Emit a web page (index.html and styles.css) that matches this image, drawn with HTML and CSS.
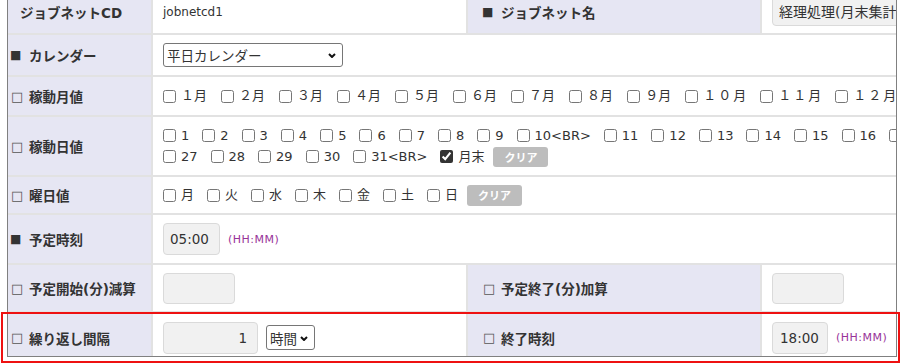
FILE: index.html
```html
<!DOCTYPE html>
<html lang="ja">
<head>
<meta charset="utf-8">
<title>ジョブネット</title>
<link rel="stylesheet" href="styles.css">
</head>
<body>
<div class="page">
  <div class="grid">
    <!-- row 1 -->
    <div class="lbl lbl-cd">ジョブネットCD</div>
    <div class="val"><span class="plain">jobnetcd1</span></div>
    <div class="lbl lbl-r"><span class="mk">■</span>ジョブネット名</div>
    <div class="val last"><input class="txt txt-name" type="text" value="経理処理(月末集計)"></div>

    <!-- row 2 -->
    <div class="lbl"><span class="mk">■</span>カレンダー</div>
    <div class="val span3">
      <div class="sel sel-cal">
        <select><option>平日カレンダー</option></select>
        <svg class="chev" width="8" height="5" viewBox="0 0 8 5"><polyline points="1,1 4,4 7,1" fill="none" stroke="#111" stroke-width="2"/></svg>
      </div>
    </div>

    <!-- row 3 -->
    <div class="lbl"><span class="mk mk-o">□</span>稼動月値</div>
    <div class="val span3">
      <div class="checks months">
        <label class="ck"><input type="checkbox">１月</label>
        <label class="ck"><input type="checkbox">２月</label>
        <label class="ck"><input type="checkbox">３月</label>
        <label class="ck"><input type="checkbox">４月</label>
        <label class="ck"><input type="checkbox">５月</label>
        <label class="ck"><input type="checkbox">６月</label>
        <label class="ck"><input type="checkbox">７月</label>
        <label class="ck"><input type="checkbox">８月</label>
        <label class="ck"><input type="checkbox">９月</label>
        <label class="ck ck-wide"><input type="checkbox">１０月</label>
        <label class="ck ck-wide"><input type="checkbox">１１月</label>
        <label class="ck ck-wide"><input type="checkbox">１２月</label>
      </div>
    </div>

    <!-- row 4 -->
    <div class="lbl"><span class="mk mk-o">□</span>稼動日値</div>
    <div class="val span3">
      <div class="lines">
        <div class="checks line">
          <label class="ck"><input type="checkbox">1</label>
          <label class="ck"><input type="checkbox">2</label>
          <label class="ck"><input type="checkbox">3</label>
          <label class="ck"><input type="checkbox">4</label>
          <label class="ck"><input type="checkbox">5</label>
          <label class="ck"><input type="checkbox">6</label>
          <label class="ck"><input type="checkbox">7</label>
          <label class="ck"><input type="checkbox">8</label>
          <label class="ck"><input type="checkbox">9</label>
          <label class="ck"><input type="checkbox">10&lt;BR&gt;</label>
          <label class="ck"><input type="checkbox">11</label>
          <label class="ck"><input type="checkbox">12</label>
          <label class="ck"><input type="checkbox">13</label>
          <label class="ck"><input type="checkbox">14</label>
          <label class="ck"><input type="checkbox">15</label>
          <label class="ck"><input type="checkbox">16</label>
          <label class="ck"><input type="checkbox">17</label>
          <label class="ck"><input type="checkbox">18</label>
          <label class="ck"><input type="checkbox">19</label>
          <label class="ck"><input type="checkbox">20</label>
          <label class="ck"><input type="checkbox">21</label>
          <label class="ck"><input type="checkbox">22</label>
          <label class="ck"><input type="checkbox">23</label>
          <label class="ck"><input type="checkbox">24</label>
          <label class="ck"><input type="checkbox">25</label>
          <label class="ck"><input type="checkbox">26</label>
        </div>
        <div class="checks line">
          <label class="ck"><input type="checkbox">27</label>
          <label class="ck"><input type="checkbox">28</label>
          <label class="ck"><input type="checkbox">29</label>
          <label class="ck"><input type="checkbox">30</label>
          <label class="ck"><input type="checkbox">31&lt;BR&gt;</label>
          <label class="ck"><input type="checkbox" checked>月末</label>
          <button class="clr" type="button">クリア</button>
        </div>
      </div>
    </div>

    <!-- row 5 -->
    <div class="lbl"><span class="mk mk-o">□</span>曜日値</div>
    <div class="val span3">
      <div class="checks">
        <label class="ck"><input type="checkbox">月</label>
        <label class="ck"><input type="checkbox">火</label>
        <label class="ck"><input type="checkbox">水</label>
        <label class="ck"><input type="checkbox">木</label>
        <label class="ck"><input type="checkbox">金</label>
        <label class="ck"><input type="checkbox">土</label>
        <label class="ck"><input type="checkbox">日</label>
        <button class="clr clr-wd" type="button">クリア</button>
      </div>
    </div>

    <!-- row 6 -->
    <div class="lbl"><span class="mk">■</span>予定時刻</div>
    <div class="val span3">
      <input class="txt w-time" type="text" value="05:00">
      <span class="hint">(HH:MM)</span>
    </div>

    <!-- row 7 -->
    <div class="lbl"><span class="mk mk-o">□</span>予定開始(分)減算</div>
    <div class="val"><input class="txt w-num" type="text" value=""></div>
    <div class="lbl lbl-r"><span class="mk mk-o">□</span>予定終了(分)加算</div>
    <div class="val last"><input class="txt w-num" type="text" value=""></div>

    <!-- row 8 -->
    <div class="lbl end low"><span class="mk mk-o">□</span>繰り返し間隔</div>
    <div class="val end low">
      <input class="txt w-rep" type="text" value="1">
      <div class="sel sel-unit">
        <select><option>時間</option></select>
        <svg class="chev" width="8" height="5" viewBox="0 0 8 5"><polyline points="1,1 4,4 7,1" fill="none" stroke="#111" stroke-width="2"/></svg>
      </div>
    </div>
    <div class="lbl lbl-r end low"><span class="mk mk-o">□</span>終了時刻</div>
    <div class="val last end low">
      <input class="txt w-time2" type="text" value="18:00">
      <span class="hint">(HH:MM)</span>
    </div>
  </div>
  <div class="redbox"></div>
</div>
</body>
</html>
```

FILE: styles.css
```css
* { box-sizing: border-box; }
html, body { margin: 0; padding: 0; }
body {
  width: 900px;
  height: 363px;
  overflow: hidden;
  background: #fff;
  color: #333;
  font-family: "DejaVu Sans", "Noto Sans CJK JP", sans-serif;
  font-size: 13px;
}
.page {
  position: relative;
  width: 900px;
  height: 363px;
  overflow: hidden;
}
.grid {
  display: grid;
  grid-template-columns: 145px 315px 294px 134px;
  grid-template-rows: 44px 42px 40px 60px 38px 50px 48px 43px;
  width: 890px;
  margin: -9px 0 0 7px;
  border: 1px solid #808080;
  border-top: 0;
}
.lbl {
  display: flex;
  align-items: center;
  padding-left: 2px;
  background: #e6e6f3;
  font-weight: bold;
  font-size: 13.5px;
  white-space: nowrap;
  overflow: hidden;
  border-right: 2px solid #e2e2e2;
  border-bottom: 2px solid #e2e2e2;
}
.lbl-cd { padding-left: 12px; }
.lbl-r { padding-left: 14px; }
.mk {
  display: inline-block;
  width: 19px;
  font-family: "DejaVu Sans", sans-serif;
  font-size: 12px;
  font-weight: normal;
  color: #333;
}
.mk-o { font-size: 13px; color: #555; padding-left: 1px; }
.val {
  display: flex;
  align-items: center;
  padding-left: 10px;
  white-space: nowrap;
  overflow: hidden;
  min-width: 0;
  border-right: 2px solid #e2e2e2;
  border-bottom: 2px solid #e2e2e2;
}
.low { padding-top: 6px; }
.span3 { grid-column: span 3; border-right: 0; }
.last { border-right: 0; }
.end { border-bottom: 0; }
.plain { font-size: 12px; }

.checks {
  display: flex;
  align-items: center;
  flex-shrink: 0;
}
.lines {
  display: flex;
  flex-direction: column;
  flex-shrink: 0;
}
.line { height: 21px; }
.ck {
  display: inline-flex;
  align-items: center;
  flex-shrink: 0;
  margin-right: 13px;
  font-size: 13px;
  line-height: 16px;
}
.months .ck { margin-right: 14px; }
.months .ck-wide { letter-spacing: 2px; margin-right: 12px; }
.ck input {
  width: 13px;
  height: 13px;
  margin: 0 5px 0 0;
  accent-color: #333;
}
.clr {
  flex-shrink: 0;
  width: 55px;
  height: 20px;
  margin-left: -4px;
  padding: 0;
  border: 0;
  border-radius: 3px;
  background: #bdbdbd;
  color: #fff;
  font: bold 11px "Noto Sans CJK JP", sans-serif;
}
.clr-wd { margin-left: -4px; height: 21px; }

.txt {
  flex-shrink: 0;
  height: 32px;
  padding: 0 7px;
  border: 1px solid #dadada;
  border-radius: 4px;
  background: #f1f1f1;
  color: #333;
  font: 13.5px "DejaVu Sans", "Noto Sans CJK JP", sans-serif;
}
.txt-name { width: 150px; height: 30px; margin-top: -3px; font-size: 14px; padding-left: 6px; }
.w-time { width: 57px; padding: 0 6px; }
.w-time2 { width: 56px; }
.w-num { width: 72px; height: 31px; }
.w-rep { width: 95px; text-align: right; padding-right: 10px; }
.hint {
  margin-left: 8px;
  color: #993399;
  font-size: 11px;
  letter-spacing: 0.5px;
}

.sel {
  position: relative;
  flex-shrink: 0;
  display: inline-block;
}
.sel select {
  -webkit-appearance: none;
  appearance: none;
  display: block;
  height: 24px;
  padding: 0 0 0 3px;
  border: 1px solid #767676;
  border-radius: 3px;
  background: #fff;
  color: #333;
  font: 13.5px "Noto Sans CJK JP", sans-serif;
}
.sel-cal select { width: 180px; }
.sel-unit { margin-left: 8px; }
.sel-unit select { width: 49px; height: 25px; }
.chev {
  position: absolute;
  right: 7px;
  top: 50%;
  margin-top: -2px;
  pointer-events: none;
}

.redbox {
  position: absolute;
  left: 1px;
  top: 312px;
  width: 899px;
  height: 51px;
  border: 2px solid #ee1111;
  pointer-events: none;
}
```
